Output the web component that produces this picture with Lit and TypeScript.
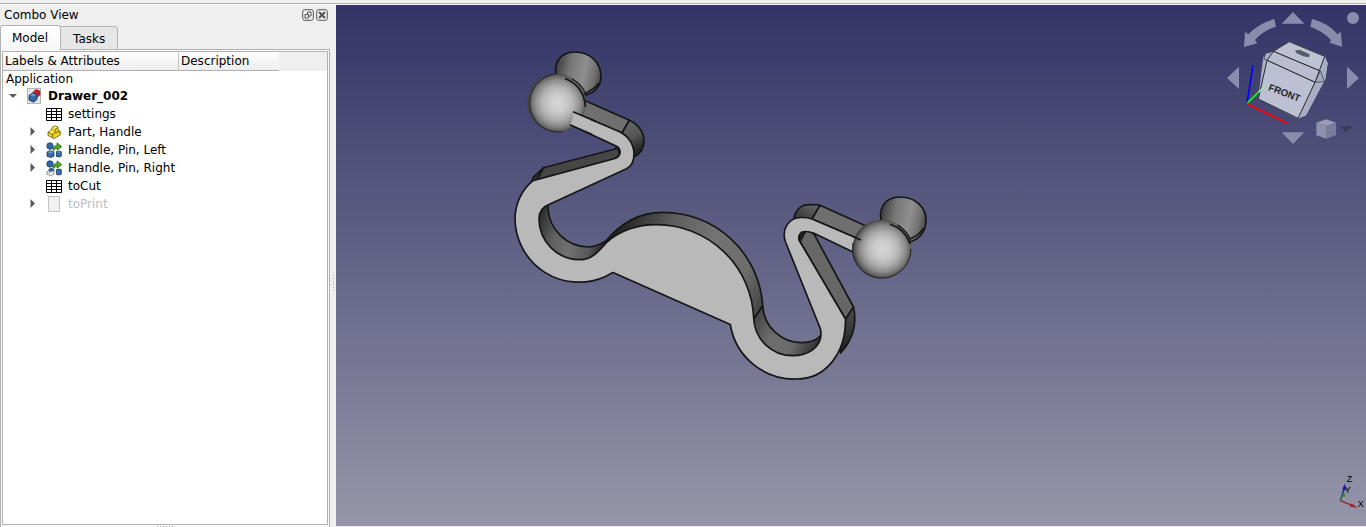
import { LitElement, html, css, svg, nothing } from "lit";
import { customElement, state } from "lit/decorators.js";
import { classMap } from "lit/directives/class-map.js";

/* Outline of the flat front side of the handle. */
const front = [
  "M571 125L573 111.7L619 131.5",
  "C628 135.5 634 144 634 154C634 161 631.5 166.5 626 169",
  "L549 204.5Q539 208 539 219A41 41 0 0 0 580 259.7C592 260 600 250 607 242",
  "C622 229 640 224.7 656.7 224.7A97 97 0 0 1 753.7 318A39 39 0 0 0 793 355.7C807 355.7 821 348 821 334L820.5 329",
  "L785.5 242C781 229 789 217.5 801 217.5Q807 217.3 812 219",
  "L861 240L853 252",
  "L814 233.3Q807 230.5 802 232Q798 235 799 240",
  "L845.5 319C846 354 825 379 797 379A65 65 0 0 1 730.3 324.5",
  "L613 272.5L605 276.7A64 64 0 0 1 515 219A49 49 0 0 1 533 180.7",
  "L614 158.8Q619 157.5 620 153Q620.5 149 617 146.5Z",
].join("");

const model = svg`
  <defs>
    <radialGradient id="ball" cx=".52" cy=".5" r=".5">
      <stop offset="0" stop-color="#d6d6d6"/><stop offset=".3" stop-color="#cbcbcb"/>
      <stop offset=".55" stop-color="#b3b3b3"/><stop offset=".78" stop-color="#8c8c8c"/>
      <stop offset=".92" stop-color="#666"/><stop offset="1" stop-color="#444"/>
    </radialGradient>
    <linearGradient id="cone" x1="0" y1=".4" x2="1" y2=".6">
      <stop offset="0" stop-color="#3e3e3e"/><stop offset=".3" stop-color="#777"/>
      <stop offset=".62" stop-color="#8f8f8f"/><stop offset=".85" stop-color="#707070"/>
      <stop offset="1" stop-color="#484848"/>
    </linearGradient>
    <linearGradient id="bend" x1="0" y1="0" x2=".4" y2="1">
      <stop offset="0" stop-color="#6f6f6f"/><stop offset=".6" stop-color="#555"/><stop offset="1" stop-color="#222"/>
    </linearGradient>
    <linearGradient id="loop" gradientUnits="userSpaceOnUse" x1="540" y1="215" x2="608" y2="240">
      <stop offset="0" stop-color="#2c2c2c"/><stop offset=".28" stop-color="#606060"/>
      <stop offset=".55" stop-color="#707070"/><stop offset=".8" stop-color="#5a5a5a"/><stop offset="1" stop-color="#1c1c1c"/>
    </linearGradient>
    <linearGradient id="hump" gradientUnits="userSpaceOnUse" x1="606" y1="240" x2="765" y2="315">
      <stop offset="0" stop-color="#1c1c1c"/><stop offset=".3" stop-color="#5e5e5e"/>
      <stop offset=".55" stop-color="#747474"/><stop offset=".8" stop-color="#6c6c6c"/><stop offset="1" stop-color="#3c3c3c"/>
    </linearGradient>
    <linearGradient id="cup" gradientUnits="userSpaceOnUse" x1="754" y1="310" x2="822" y2="345">
      <stop offset="0" stop-color="#3e3e3e"/><stop offset=".35" stop-color="#6c6c6c"/>
      <stop offset=".65" stop-color="#6c6c6c"/><stop offset="1" stop-color="#262626"/>
    </linearGradient>
    <linearGradient id="heel" x1="0" y1="0" x2="0" y2="1">
      <stop offset="0" stop-color="#505050"/><stop offset="1" stop-color="#1e1e1e"/>
    </linearGradient>
    <linearGradient id="knee" x1="0" y1="1" x2="1" y2="0">
      <stop offset="0" stop-color="#2c2c2c"/><stop offset="1" stop-color="#6c6c6c"/>
    </linearGradient>
  </defs>
  <g stroke="#161616" stroke-width="1.7" stroke-linejoin="round" stroke-linecap="round">
    <path fill="url(#cone)" d="M558 80C551 64 560 52 575 52C590 52 601 63 601 76C601 86 595 92 586 95Z"/>
    <path fill="none" d="M598 84Q594 89 586 93"/>
    <path fill="#6f6f6f" d="M586 101L629.3 120.3L622 133L573 112Z"/>
    <path fill="url(#bend)" d="M629.3 120.3C638 124 644 132 644 141Q644 152 634 157L615 150L622 133Z"/>
    <path fill="#464646" d="M618 148.3L543.5 167.7L536 180L614 159L620 156Z"/>
    <path fill="#303030" d="M543.5 167.7L537 180L531 183L533.5 177Z"/>
    <path fill="url(#loop)" d="M548 205V208A41 41 0 0 0 588 247Q596 247 606 241L600 265H560L530 240V210Z"/>
    <path fill="url(#hump)" d="M606 241C623 220 643 212.3 663 212.3A99.7 99.7 0 0 1 762.7 306L753.7 319L735 316L620 250Z"/>
    <path fill="url(#cup)" d="M762.7 306A39 39 0 0 0 802 342.7Q815 342.5 821 335L825 355L793 365L755 345L745 322L753.7 319Z"/>
    <path fill="url(#knee)" d="M794 218C796 209 802 204.7 809 204.7Q816 204.3 820 205.3L812 219L800 222Z"/>
    <path fill="#6f6f6f" d="M820 205.3L866 226L861 240L812 219Z"/>
    <path fill="#676767" d="M814 234L853.5 307L845.5 319.3L799 240Q802 231 809 231Z"/>
    <path fill="none" d="M801 240L805 232"/>
    <path fill="url(#heel)" d="M853.5 307Q859 333 840.7 353L838 340L845.5 319.3Z"/>
    <path fill="#b9b9b9" d=${front} />
    <path fill="url(#cone)" d="M883 226C876 209 885 197 900 197C915 197 926 207 926 220C926 231 920 239 910 241.7Z"/>
    <path fill="none" d="M923 229Q919 235 911 238.5"/>
  </g>
  <g fill="url(#ball)">
    <circle cx="556.5" cy="103" r="29.3"/>
    <circle cx="881.7" cy="249" r="29.3"/>
  </g>
  <g fill="none" stroke="#222">
    <path d="M556 73.7A29.3 29.3 0 1 0 562 132M853 243A29.3 29.3 0 1 0 911 249"/>
  </g>
  <path fill="#b9b9b9" d="M573.5 112L590 119L587 132L570 125Q573 120 573.5 112Z"/>
  <g fill="none" stroke="#161616" stroke-width="1.7">
    <path d="M573 111.7L596 121.5M570 124.7L592 134.5M853 236.5L861 240"/>
    <path d="M565 78.5Q584 86 585.5 107M890 224.3Q905 229 910.3 244"/>
    <path stroke-width="1.2" d="M572 79Q583 85 585.5 94M898 225Q908 232 910.5 240"/>
  </g>
`;

const navCube = svg`
  <g fill="#8b8bae">
    <path d="M231 36L265 71H197ZM231 432L265 397H197ZM33 234L69 200V267ZM429 234L393 200V267Z"/>
    <circle cx="411" cy="54" r="18"/>
    <path d="M175 57L180 80Q142 92 117 120L124 130L84 141L87 95L97 103Q130 68 175 57Z"/>
    <path d="M288 57L283 80Q322 94 345 120L341 128L378 140L375 95L365 103Q335 68 288 57Z"/>
  </g>
  <path fill="#a9afc6" d="M220 124L326 168L335 190L328 237L270 346L245 356L127 298L135 225L142 170L172 153Z"/>
  <path fill="#a8aec4" d="M326 169L335 190L328 237L270 346L247 355L297 247L325 245L313 212Z"/>
  <g stroke="#2a2a30" stroke-width="3" stroke-linejoin="round">
    <path fill="#bdc1d2" d="M220 125L326 169L310 212L172 154Z"/>
    <path fill="#b9bdcf" d="M172 154L310 212L297 247L153 181Z"/>
    <path fill="#bcc0d2" d="M153 181L297 247L246 355L127 297Z"/>
    <path fill="#a3aac2" stroke-width="2" d="M172 154L153 181L144 176L148 160ZM313 212L325 245L297 247Z"/>
  </g>
  <path fill="#555968" d="M237 151L252 150L281 163L279 172L262 169L241 159Z"/>
  <text class="face" x="155" y="270" transform="rotate(21 155 270)">FRONT</text>
  <g fill="none" stroke-width="5">
    <path stroke="#00f" d="M111 196L93 310"/>
    <path stroke="#0f0" d="M93 310L126 278"/>
    <path stroke="#9be0ae" d="M126 278L155 250"/>
    <path stroke="#f00" d="M93 311L213 370"/>
  </g>
  <path fill="#9d9db8" d="M330 358L360 368L332 378L301 368Z"/>
  <path fill="#8f8fae" d="M301 368L332 378V416L301 406Z"/>
  <path fill="#7b7b9e" d="M360 368L332 378V416L360 405Z"/>
  <path fill="#3b3b58" d="M372 378H409L390 397Z"/>
`;

const axisCross = svg`
  <g fill="none" stroke-width="4">
    <path stroke="#2323a0" d="M73 122L84 88"/>
    <path stroke="#238c23" d="M73 120L80 108"/>
    <path stroke="#a02323" d="M73 122L108 136"/>
  </g>
  <path fill="#2323a0" d="M87 71L91 92L78 88Z"/>
  <path fill="#238c23" d="M84 97L88 110L75 108Z"/>
  <path fill="#a02323" d="M106 130L125 143L102 140Z"/>
  <g class="axis"><text x="92" y="65">Z</text><text x="86" y="98">Y</text><text x="125" y="140">X</text></g>
`;

const icons: Record<string, unknown> = {
  doc: svg`<rect x=".5" y=".5" width="13" height="15" fill="#e6e6e6" stroke="#b4b4b4"/>
    <path fill="#cf1c24" stroke="#8e1219" stroke-width=".6" d="M6 4L9 1.5L13 3V7L10.5 9L7 8Z"/>
    <path fill="#3465a4" stroke="#15325e" stroke-width=".8" d="M2 7.3L6 4.8L10 6.5V11.5L6.5 14.3L2 12Z"/>
    <path fill="#6a96cc" d="M2.8 7.5L6 5.5L9.2 6.9L6.3 8.6Z"/>`,
  sheet: svg`<rect x=".5" y="2.5" width="15" height="12" fill="#fff"/>
    <path fill="none" stroke="#000" d="M.5 2.5H15.5V14.5H.5ZM5.5 2V15M10.5 2V15M0 5.5H16M0 8.5H16M0 11.5H16"/>`,
  part: svg`<path fill="#e8d21d" stroke="#6b5d05" stroke-width=".8" d="M2 8L5 6.5L6 3.5L9 1.8L12 3V6L14.3 7.3V11L8 14.6L2 11.5Z"/>
    <path fill="#fbf08a" d="M3 8L5.4 6.8L8.3 8.4L6 9.6ZM6.6 3.9L9 2.5L11.2 3.3L9 4.8Z"/>
    <path fill="none" stroke="#6b5d05" stroke-width=".8" d="M2 8L6.5 10.4L9 8.8V5.5L12 3.6M6.5 10.4V13.6M9 8.8L14.3 7.4"/>`,
  link: svg`<circle cx="4" cy="4" r="3.2" fill="#3465a4" stroke="#173a68" stroke-width=".8"/>
    <path fill="#4cae22" stroke="#1d5c08" stroke-width=".7" d="M7 8Q7 3.5 11 3.5V.8L15.8 4.7L11 8.2V6Q8.5 6 8.5 8Z"/>
    <path fill="#3a6bab" stroke="#173a68" stroke-width=".8" d="M1 10L4 8.6L8 9.7V14.2L5 15.5L1 14.3ZM10.5 9.6L13 9L15.3 9.7V14.3L13 15L10.5 14.4Z"/>
    <path fill="#8ab0dd" d="M1.8 10.2L4 9.2L7 10L5 11ZM11.2 9.9L13 9.5L14.7 9.9L13 10.4Z"/>`,
  linkMod: svg`<circle cx="4" cy="4" r="3.2" fill="#3465a4" stroke="#173a68" stroke-width=".8"/>
    <path fill="#4cae22" stroke="#1d5c08" stroke-width=".7" d="M7 8Q7 3.5 11 3.5V.8L15.8 4.7L11 8.2V6Q8.5 6 8.5 8Z"/>
    <path fill="#3a6bab" stroke="#173a68" stroke-width=".8" d="M3 9L6 8.4L8 9.5V11L3 11ZM10.5 9.6L13 9L15.3 9.7V14.3L13 15L10.5 14.4Z"/>
    <path fill="#f4f4f4" stroke="#777" stroke-width=".8" d="M1 11.5L4 12.5L8 10.5V14L5 15.5L1 14.3Z"/>`,
  blank: svg`<rect x="2.5" y=".5" width="11" height="15" fill="#f1f1f1" stroke="#c4c4c4"/>`,
};

interface Item {
  label: string;
  icon: string;
  branch: boolean;
  dim?: boolean;
}
const items: Item[] = [
  { label: "settings", icon: "sheet", branch: false },
  { label: "Part, Handle", icon: "part", branch: true },
  { label: "Handle, Pin, Left", icon: "link", branch: true },
  { label: "Handle, Pin, Right", icon: "linkMod", branch: true },
  { label: "toCut", icon: "sheet", branch: false },
  { label: "toPrint", icon: "blank", branch: true, dim: true },
];

const glyph = (name: string) =>
  html`<svg class="glyph" viewBox="0 0 16 16" aria-hidden="true">${icons[name]}</svg>`;

@customElement("combo-view")
export class ComboView extends LitElement {
  @state() private tab = "Model";
  @state() private open = true;

  static styles = css`
    :host {
      display: flex;
      flex-direction: column;
      font: 12px/18px "DejaVu Sans", sans-serif;
      color: #000;
    }
    button {
      font: inherit;
      color: inherit;
      border: 0;
      padding: 0;
      background: none;
    }
    .title {
      display: flex;
      align-items: center;
      gap: 2px;
      height: 20px;
      padding: 0 2px 0 4px;
    }
    .name {
      flex: 1;
    }
    .tool {
      width: 12px;
      height: 12px;
    }
    .tool svg {
      display: block;
    }
    .tabs {
      display: flex;
      align-items: flex-end;
      height: 25px;
    }
    .tab {
      height: 24px;
      padding: 2px 12px 0;
      border: 1px solid #b4b4b4;
      border-left: 0;
      background: #e6e6e6;
      border-radius: 0 3px 0 0;
    }
    .tab.current {
      height: 25px;
      padding: 0 12px 0 11px;
      border-left: 1px solid #b4b4b4;
      border-bottom: 0;
      border-radius: 3px 3px 0 0;
      background: linear-gradient(#fff, #f7f7f7);
    }
    .fill {
      flex: 1;
      align-self: stretch;
      border-bottom: 1px solid #b0b0b0;
    }
    .pane {
      flex: 1;
      display: flex;
      flex-direction: column;
      padding: 1px 1px 0 1px;
      border: solid #b0b0b0;
      border-width: 0 1px;
      background: #fbfbfb;
    }
    .frame {
      flex: 1;
      border: 1px solid #b0b0b0;
      background: #fff;
    }
    table {
      width: 100%;
      border-collapse: separate;
      border-spacing: 0;
      table-layout: fixed;
    }
    .first {
      width: 176px;
    }
    .second {
      width: 100px;
    }
    th {
      box-sizing: border-box;
      height: 19px;
      padding: 1px 2px 0;
      line-height: 17px;
      font-weight: normal;
      text-align: left;
      background: linear-gradient(#fff, #ededed);
      border-bottom: 1px solid #b0b0b0;
    }
    th.first {
      border-right: 1px solid #c4c4c4;
    }
    th.rest {
      background: #efefef;
      border-bottom-color: #efefef;
    }
    td {
      padding: 0;
    }
    .root {
      height: 16px;
      line-height: 16px;
      padding-left: 3px;
    }
    .row {
      display: flex;
      align-items: center;
      height: 18px;
      white-space: nowrap;
    }
    .doc {
      padding-left: 3px;
      font-weight: bold;
    }
    .leaf {
      padding-left: 22px;
    }
    .twist {
      width: 14px;
      height: 14px;
      flex: none;
    }
    .twist svg {
      display: block;
      margin: auto;
    }
    .glyph {
      width: 16px;
      height: 16px;
      flex: none;
      margin: 0 6px 0 7px;
    }
    .doc .glyph {
      margin-right: 5px;
    }
    .dim {
      color: #bebebe;
    }
    .grip {
      height: 2px;
      display: flex;
      justify-content: center;
      align-items: flex-end;
      gap: 2px;
    }
    .grip i {
      width: 1px;
      height: 1px;
      background: #a0a0a0;
    }
  `;

  private twisty(label: string, down: boolean, click?: () => void) {
    return html`<button class="twist" aria-label="Toggle ${label}" aria-expanded=${down} @click=${click}>
      <svg width="10" height="10" viewBox="0 0 10 10">
        <path fill="#5c5c5c" d=${down ? "M1 3H9L5 7Z" : "M3.5 0L8 4.5L3.5 9Z"} />
      </svg>
    </button>`;
  }

  render() {
    return html`
      <div class="title">
        <span class="name">Combo View</span>
        <button class="tool" aria-label="Float">
          <svg width="12" height="12" viewBox="0 0 12 12" fill="none" stroke="#555">
            <rect x=".7" y=".7" width="10.6" height="10.6" rx="2" />
            <path d="M5.5 5V3H9V7H7M3 5.5H6.5V9H3Z" />
          </svg>
        </button>
        <button class="tool" aria-label="Close">
          <svg width="12" height="12" viewBox="0 0 12 12" fill="none" stroke="#555">
            <rect x=".7" y=".7" width="10.6" height="10.6" rx="2" />
            <path stroke-width="2" d="M3 3L9 9M9 3L3 9" />
          </svg>
        </button>
      </div>
      <div class="tabs" role="tablist">
        ${["Model", "Tasks"].map(
          (t) => html`<button
            role="tab"
            class=${classMap({ tab: true, current: t === this.tab })}
            aria-selected=${t === this.tab}
            @click=${() => (this.tab = t)}
          >${t}</button>`
        )}
        <div class="fill"></div>
      </div>
      <div class="pane">
        <div class="frame">
          <table>
            <thead>
              <tr>
                <th class="first" scope="col">Labels &amp; Attributes</th>
                <th class="second" scope="col">Description</th>
                <th class="rest"></th>
              </tr>
            </thead>
            <tbody>
              <tr><td colspan="3"><div class="root">Application</div></td></tr>
              <tr><td colspan="3"><div class="row doc">
                ${this.twisty("Drawer_002", this.open, () => (this.open = !this.open))}
                ${glyph("doc")}<span>Drawer_002</span>
              </div></td></tr>
              ${this.open
                ? items.map((it) => html`<tr><td colspan="3">
                    <div class=${classMap({ row: true, leaf: true, dim: !!it.dim })}>
                      ${it.branch ? this.twisty(it.label, false) : html`<span class="twist"></span>`}
                      ${glyph(it.icon)}<span>${it.label}</span>
                    </div>
                  </td></tr>`)
                : nothing}
            </tbody>
          </table>
        </div>
        <div class="grip"><i></i><i></i><i></i><i></i><i></i><i></i></div>
      </div>
    `;
  }
}

@customElement("scene-view")
export class SceneView extends LitElement {
  static styles = css`
    :host {
      display: block;
      position: relative;
      overflow: hidden;
      background: linear-gradient(#333366, #9696aa);
    }
    .model {
      position: absolute;
      inset: 0;
      width: 100%;
      height: 100%;
    }
    .nav {
      position: absolute;
      top: 0;
      right: 0;
      width: 150px;
      height: 145px;
    }
    .cross {
      position: absolute;
      right: 0;
      bottom: 0;
      width: 50px;
      height: 66px;
    }
    .face {
      font: bold 29px "Liberation Sans", sans-serif;
      fill: #23252c;
    }
    .axis {
      font: 27px "Liberation Sans", sans-serif;
      fill: #000;
    }
  `;

  render() {
    return html`
      <svg class="model" viewBox="336 5 1030 521" role="img" aria-label="Drawer handle">${model}</svg>
      <svg class="nav" viewBox="0 15 450 435" role="img" aria-label="Navigation cube">${navCube}</svg>
      <svg class="cross" viewBox="0 0 150 198" role="img" aria-label="Axes">${axisCross}</svg>
    `;
  }
}

@customElement("app-root")
export class AppRoot extends LitElement {
  static styles = css`
    :host {
      display: flex;
      flex-direction: column;
      min-height: 100vh;
      background: #efefef;
    }
    .edge {
      height: 1px;
      margin-top: 3px;
      background: #b0b0b0;
    }
    .work {
      flex: 1;
      display: flex;
      border-top: 1px solid #f8f8f8;
    }
    combo-view {
      width: 330px;
      flex: none;
    }
    .handle {
      width: 6px;
      padding-top: 34px;
      display: flex;
      flex-direction: column;
      align-items: center;
      justify-content: center;
      gap: 2px;
    }
    .handle i {
      width: 1px;
      height: 1px;
      background: #a8a8a8;
    }
    scene-view {
      flex: 1;
      margin-bottom: 1px;
    }
  `;

  render() {
    return html`
      <div class="edge"></div>
      <div class="work">
        <combo-view></combo-view>
        <div class="handle"><i></i><i></i><i></i><i></i><i></i><i></i></div>
        <scene-view></scene-view>
      </div>
    `;
  }
}
